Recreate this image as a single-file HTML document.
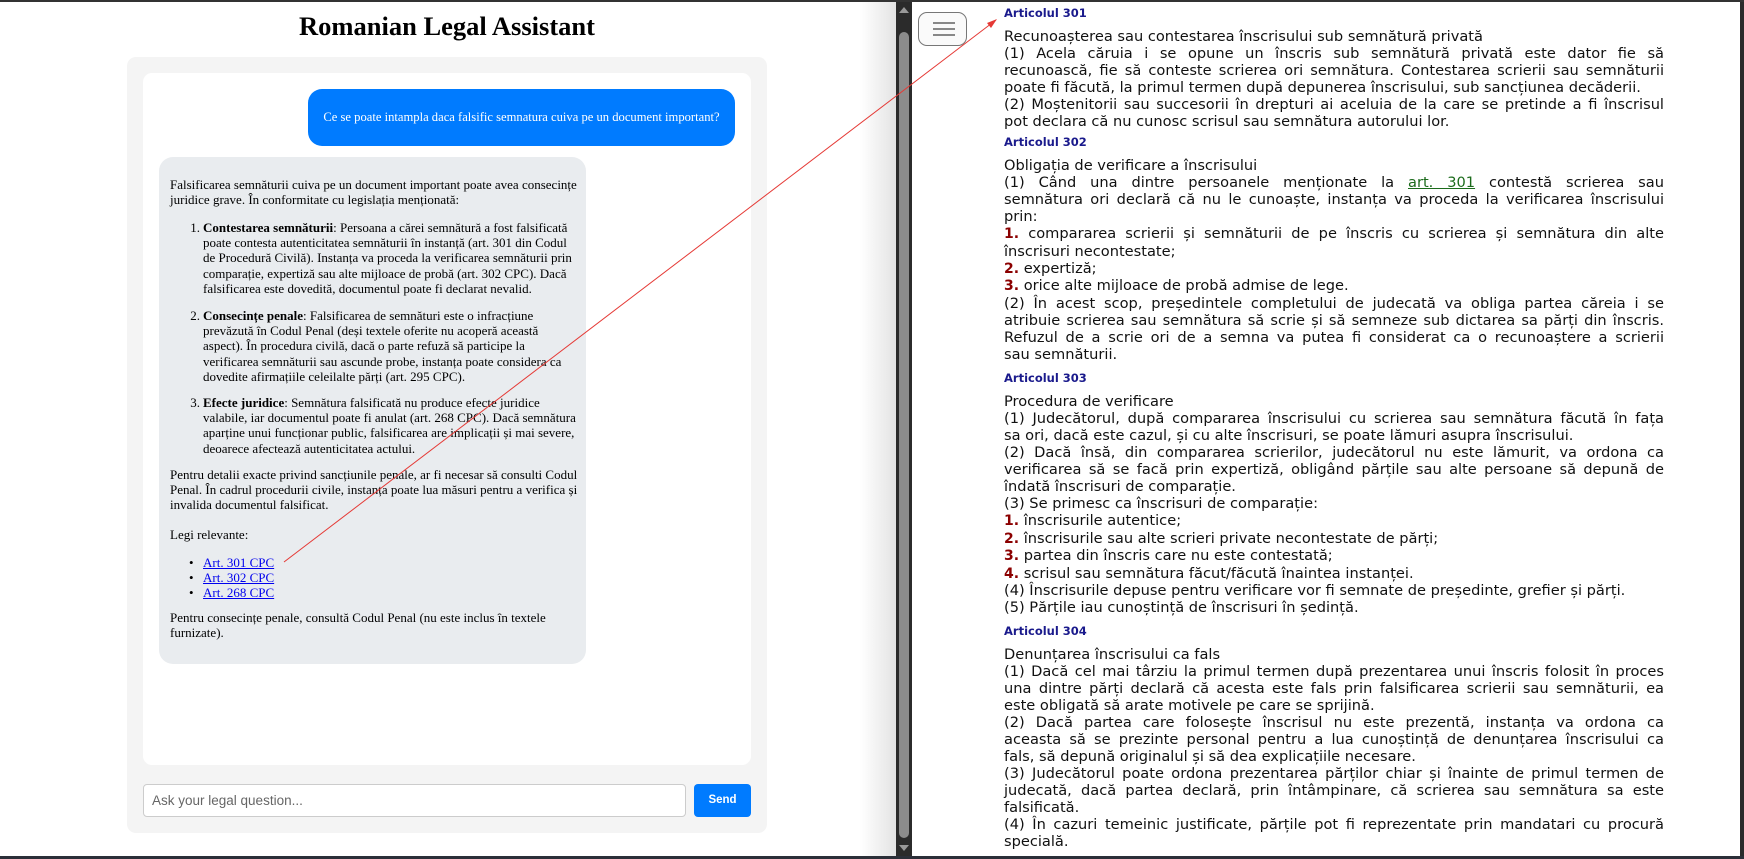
<!DOCTYPE html>
<html><head><meta charset="utf-8"><style>
*{margin:0;padding:0;box-sizing:border-box}
html,body{width:1744px;height:859px;overflow:hidden;background:#fff;position:relative}
.abs{position:absolute}
#left{left:0;top:0;width:896px;height:859px;background:#fff;font-family:"Liberation Serif",serif}
h1{position:absolute;left:0;width:894px;text-align:center;top:9px;font-size:26.5px;font-weight:bold;line-height:34px;color:#000}
.cont{left:127px;top:57px;width:640px;height:776px;background:#f4f4f4;border-radius:9px}
.chat{left:143px;top:73px;width:608px;height:692px;background:#fff;border-radius:9px}
.user{left:308px;top:89px;width:427px;height:57px;background:#007bff;border-radius:14px;color:#fff;font-size:12.6px;line-height:57px;text-align:center;white-space:nowrap}
.bot{left:159px;top:157px;width:427px;height:507px;background:#e9ecef;border-radius:14px}
.t{position:absolute;white-space:nowrap;font-size:13px;line-height:15.2px;color:#000}
.num{position:absolute;white-space:nowrap;font-size:13px;line-height:15.2px;text-align:right;width:20px}
a{color:#0000ee;text-decoration:underline}
.inp{left:143px;top:784px;width:543px;height:33px;border:1px solid #ccc;border-radius:4px;background:#fff;font-family:"Liberation Sans",sans-serif;font-size:13.5px;color:#666;padding-left:8px;line-height:31px}
.send{left:694px;top:784px;width:57px;height:33px;background:#007bff;border-radius:4px;color:#fff;font-family:"Liberation Sans",sans-serif;font-size:11.5px;font-weight:bold;text-align:center;line-height:33px}
#right{left:912px;top:0;width:828px;height:859px;background:#fff;font-family:"DejaVu Sans","Liberation Sans",sans-serif;color:#111}
.art{position:absolute;left:92px;width:660px}
.h{font-size:11.5px;font-weight:bold;color:#1a1a8c;line-height:14px;margin-bottom:8px}
.l{font-size:14.6px;line-height:17px;white-space:nowrap;height:17px}
.j{text-align:justify;text-align-last:justify}
.i{height:17.5px;line-height:17.5px}
.n{color:#8b0000;font-weight:bold;font-size:14px}
.g{color:#1b6b1b;text-decoration:underline}
</style></head><body>
<div id="left" class="abs">
<h1>Romanian Legal Assistant</h1>
<div class="abs cont"></div>
<div class="abs chat"></div>
<div class="abs user">Ce se poate intampla daca falsific semnatura cuiva pe un document important?</div>
<div class="abs bot"></div>
<div class="t" style="left:170px;top:177px">Falsificarea semnăturii cuiva pe un document important poate avea consecințe<br>juridice grave. În conformitate cu legislația menționată:</div>
<div class="num" style="left:180px;top:220px">1.</div>
<div class="t" style="left:203px;top:220px"><b>Contestarea semnăturii</b>: Persoana a cărei semnătură a fost falsificată<br>poate contesta autenticitatea semnăturii în instanță (art. 301 din Codul<br>de Procedură Civilă). Instanța va proceda la verificarea semnăturii prin<br>comparație, expertiză sau alte mijloace de probă (art. 302 CPC). Dacă<br>falsificarea este dovedită, documentul poate fi declarat nevalid.</div>
<div class="num" style="left:180px;top:308px">2.</div>
<div class="t" style="left:203px;top:308px"><b>Consecințe penale</b>: Falsificarea de semnături este o infracțiune<br>prevăzută în Codul Penal (deși textele oferite nu acoperă această<br>aspect). În procedura civilă, dacă o parte refuză să participe la<br>verificarea semnăturii sau ascunde probe, instanța poate considera ca<br>dovedite afirmațiile celeilalte părți (art. 295 CPC).</div>
<div class="num" style="left:180px;top:395px">3.</div>
<div class="t" style="left:203px;top:395px"><b>Efecte juridice</b>: Semnătura falsificată nu produce efecte juridice<br>valabile, iar documentul poate fi anulat (art. 268 CPC). Dacă semnătura<br>aparține unui funcționar public, falsificarea are implicații și mai severe,<br>deoarece afectează autenticitatea actului.</div>
<div class="t" style="left:170px;top:467px">Pentru detalii exacte privind sancțiunile penale, ar fi necesar să consulti Codul<br>Penal. În cadrul procedurii civile, instanța poate lua măsuri pentru a verifica și<br>invalida documentul falsificat.</div>
<div class="t" style="left:170px;top:527px">Legi relevante:</div>
<div class="t" style="left:189px;top:555px">•<br>•<br>•</div>
<div class="t" style="left:203px;top:555px"><a>Art. 301 CPC</a><br><a>Art. 302 CPC</a><br><a>Art. 268 CPC</a></div>
<div class="t" style="left:170px;top:610px">Pentru consecințe penale, consultă Codul Penal (nu este inclus în textele<br>furnizate).</div>
<div class="abs inp">Ask your legal question...</div>
<div class="abs send">Send</div>
<div class="abs" style="left:860px;top:0;width:36px;height:859px;background:linear-gradient(to right,rgba(255,255,255,0),rgba(200,200,200,.5))"></div>
</div>
<div class="abs" style="left:896px;top:0;width:16px;height:859px;background:#2b2b2b"></div>
<div class="abs" style="left:899px;top:32px;width:10px;height:806px;background:#8c8c8c;border-radius:5px"></div>
<div class="abs" style="left:899px;top:7px;width:0;height:0;border-left:5px solid transparent;border-right:5px solid transparent;border-bottom:6px solid #999"></div>
<div class="abs" style="left:899px;top:845px;width:0;height:0;border-left:5px solid transparent;border-right:5px solid transparent;border-top:6px solid #999"></div>
<div id="right" class="abs">
<div class="abs" style="left:6px;top:12px;width:49px;height:34px;border:1px solid #777;border-radius:9px;background:#fafafa"></div>
<div class="abs" style="left:21px;top:22px;width:22px;height:2px;background:#888"></div>
<div class="abs" style="left:21px;top:28px;width:22px;height:2px;background:#888"></div>
<div class="abs" style="left:21px;top:34px;width:22px;height:2px;background:#888"></div>

<div class="art" style="top:6px">
<div class="h">Articolul 301</div>
<div class="l">Recunoașterea sau contestarea înscrisului sub semnătură privată</div>
<div class="l j">(1) Acela căruia i se opune un înscris sub semnătură privată este dator fie să</div>
<div class="l j">recunoască, fie să conteste scrierea ori semnătura. Contestarea scrierii sau semnăturii</div>
<div class="l">poate fi făcută, la primul termen după depunerea înscrisului, sub sancțiunea decăderii.</div>
<div class="l j">(2) Moștenitorii sau succesorii în drepturi ai aceluia de la care se pretinde a fi înscrisul</div>
<div class="l">pot declara că nu cunosc scrisul sau semnătura autorului lor.</div>
</div>

<div class="art" style="top:135px">
<div class="h">Articolul 302</div>
<div class="l">Obligația de verificare a înscrisului</div>
<div class="l j">(1) Când una dintre persoanele menționate la <span class="g">art. 301</span> contestă scrierea sau</div>
<div class="l j">semnătura ori declară că nu le cunoaște, instanța va proceda la verificarea înscrisului</div>
<div class="l">prin:</div>
<div class="l j i"><span class="n">1.</span> compararea scrierii și semnăturii de pe înscris cu scrierea și semnătura din alte</div>
<div class="l">înscrisuri necontestate;</div>
<div class="l i"><span class="n">2.</span> expertiză;</div>
<div class="l i"><span class="n">3.</span> orice alte mijloace de probă admise de lege.</div>
<div class="l j">(2) În acest scop, președintele completului de judecată va obliga partea căreia i se</div>
<div class="l j">atribuie scrierea sau semnătura să scrie și să semneze sub dictarea sa părți din înscris.</div>
<div class="l j">Refuzul de a scrie ori de a semna va putea fi considerat ca o recunoaștere a scrierii</div>
<div class="l">sau semnăturii.</div>
</div>

<div class="art" style="top:371px">
<div class="h">Articolul 303</div>
<div class="l">Procedura de verificare</div>
<div class="l j">(1) Judecătorul, după compararea înscrisului cu scrierea sau semnătura făcută în fața</div>
<div class="l">sa ori, dacă este cazul, și cu alte înscrisuri, se poate lămuri asupra înscrisului.</div>
<div class="l j">(2) Dacă însă, din compararea scrierilor, judecătorul nu este lămurit, va ordona ca</div>
<div class="l j">verificarea să se facă prin expertiză, obligând părțile sau alte persoane să depună de</div>
<div class="l">îndată înscrisuri de comparație.</div>
<div class="l">(3) Se primesc ca înscrisuri de comparație:</div>
<div class="l i"><span class="n">1.</span> înscrisurile autentice;</div>
<div class="l i"><span class="n">2.</span> înscrisurile sau alte scrieri private necontestate de părți;</div>
<div class="l i"><span class="n">3.</span> partea din înscris care nu este contestată;</div>
<div class="l i"><span class="n">4.</span> scrisul sau semnătura făcut/făcută înaintea instanței.</div>
<div class="l">(4) Înscrisurile depuse pentru verificare vor fi semnate de președinte, grefier și părți.</div>
<div class="l">(5) Părțile iau cunoștință de înscrisuri în ședință.</div>
</div>

<div class="art" style="top:624px">
<div class="h">Articolul 304</div>
<div class="l">Denunțarea înscrisului ca fals</div>
<div class="l j">(1) Dacă cel mai târziu la primul termen după prezentarea unui înscris folosit în proces</div>
<div class="l j">una dintre părți declară că acesta este fals prin falsificarea scrierii sau semnăturii, ea</div>
<div class="l">este obligată să arate motivele pe care se sprijină.</div>
<div class="l j">(2) Dacă partea care folosește înscrisul nu este prezentă, instanța va ordona ca</div>
<div class="l j">aceasta să se prezinte personal pentru a lua cunoștință de denunțarea înscrisului ca</div>
<div class="l">fals, să depună originalul și să dea explicațiile necesare.</div>
<div class="l j">(3) Judecătorul poate ordona prezentarea părților chiar și înainte de primul termen de</div>
<div class="l j">judecată, dacă partea declară, prin întâmpinare, că scrierea sau semnătura sa este</div>
<div class="l">falsificată.</div>
<div class="l j">(4) În cazuri temeinic justificate, părțile pot fi reprezentate prin mandatari cu procură</div>
<div class="l">specială.</div>
</div>
</div>
<div class="abs" style="left:1740px;top:0;width:4px;height:859px;background:#2b2b2b"></div>
<div class="abs" style="left:0;top:0;width:1744px;height:2px;background:#333"></div>
<div class="abs" style="left:0;top:856px;width:1744px;height:3px;background:#2b2f38"></div>
<svg class="abs" style="left:0;top:0" width="1744" height="859">
<line x1="284" y1="562" x2="996" y2="20" stroke="#e53935" stroke-width="1"/>
<polygon points="997,19 987,23 991,28" fill="#e53935"/>
</svg>
</body></html>
